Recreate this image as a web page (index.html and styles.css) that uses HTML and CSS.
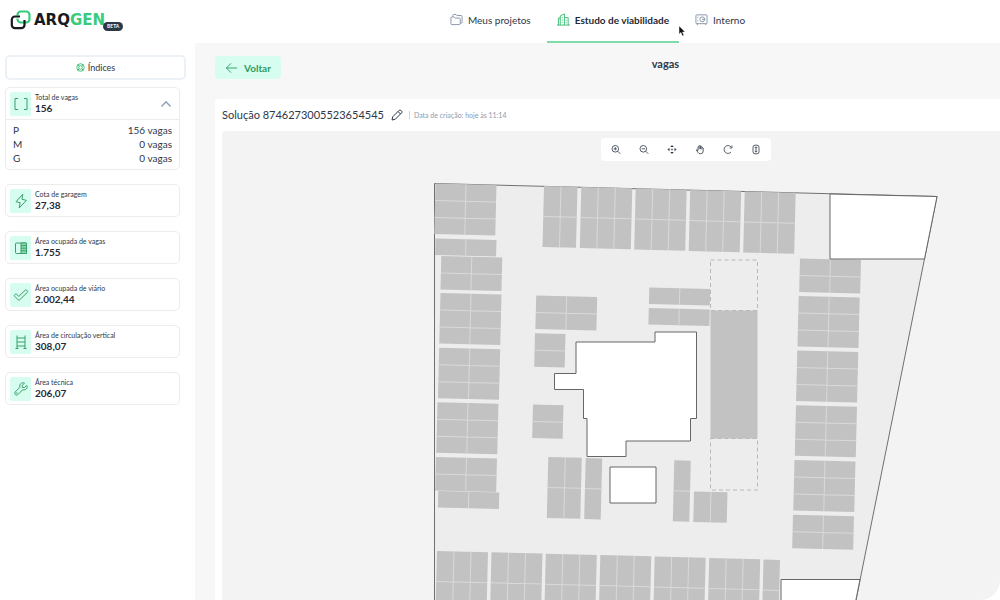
FILE: index.html
```html
<!DOCTYPE html>
<html lang="pt-BR">
<head>
<meta charset="utf-8">
<meta name="viewport" content="width=device-width, initial-scale=1">
<title>ARQGEN - Estudo de viabilidade</title>
<link rel="stylesheet" href="styles.css">
</head>
<body>
<header class="topbar">
  <a class="logo" href="#" aria-label="ARQGEN beta">
    <svg class="logo-mark" viewBox="0 0 22 20" fill="none" stroke-width="2.2" aria-hidden="true">
      <path class="mark-green" d="M7.500 5.500V4.700A3.200 3.200 0 0 1 10.700 1.500H16.300A3.200 3.200 0 0 1 19.500 4.700V9.300A3.200 3.200 0 0 1 16.300 12.500H10.700A3.200 3.200 0 0 1 7.500 9.300V8.500"/>
      <path class="mark-dark" d="M10 6.500H5A3.200 3.200 0 0 0 1.800 9.700V15A3.200 3.200 0 0 0 5 18.200h6.300a3.200 3.200 0 0 0 3.200-3.200V10"/>
    </svg>
    <span class="logo-text">ARQ<span class="logo-accent">GEN</span></span>
    <span class="beta">BETA</span>
  </a>
  <nav class="tabs">
    <a class="tab" href="#">
      <svg class="tab-icon" viewBox="0 0 14 14" aria-hidden="true"><path d="M3 4V2.500q0-1 1-1h2.500l1 1.200H12q1 0 1 1V10q0 1-1 1h-1M1 5.200q0-1 1-1h2.300l1.200 1.300H10q1 0 1 1v5q0 1-1 1H2q-1 0-1-1z"/></svg>
      Meus projetos
    </a>
    <a class="tab active" href="#" aria-current="page">
      <svg class="tab-icon" viewBox="0 0 14 14" aria-hidden="true"><path d="M1.500 13V5.500h2V3.200L8 1v12M8 5h4v8M0 13h14M3.500 5.500V13M5.700 4.500v1M5.700 7v1M5.700 9.500v1M10 7.500v1M10 10v1"/></svg>
      Estudo de viabilidade
    </a>
    <a class="tab" href="#">
      <svg class="tab-icon" viewBox="0 0 14 14" aria-hidden="true"><rect x="1" y="2" width="12" height="9.500" rx="1"/><path d="M2.500 11.500V13M11.500 11.500V13M3 4v1M3 8v1M7.500 6.800h3.500"/><circle cx="7.800" cy="6.800" r="2.600"/></svg>
      Interno
    </a>
  </nav>
</header>

<div class="layout">
  <aside class="sidebar">
    <button class="indices" type="button">
      <svg class="indices-icon" viewBox="0 0 10 10" aria-hidden="true"><circle cx="5" cy="5" r="4.200"/><circle cx="5" cy="5" r="2"/><path d="M2 2l1.500 1.500M8 2L6.500 3.500M2 8l1.500-1.500M8 8L6.500 6.500"/></svg>
      Índices
    </button>
    <section class="metric">
      <div class="metric-head">
        <span class="metric-icon"><svg viewBox="0 0 16 16" aria-hidden="true"><path d="M5 2.500H2v11h3M11 2.500h3v11h-3"/></svg></span>
        <div class="metric-text"><span class="metric-label">Total de vagas</span><strong>156</strong></div>
        <button class="toggle" type="button" aria-label="Recolher" aria-expanded="true"><svg viewBox="0 0 12 8" aria-hidden="true"><path d="M1.500 6.500L6 1.800l4.500 4.700"/></svg></button>
      </div>
      <dl class="breakdown">
        <div><dt>P</dt><dd>156 vagas</dd></div>
        <div><dt>M</dt><dd>0 vagas</dd></div>
        <div><dt>G</dt><dd>0 vagas</dd></div>
      </dl>
    </section>
    <section class="metric"><div class="metric-head">
      <span class="metric-icon"><svg viewBox="0 0 16 16" aria-hidden="true"><path d="M9.800 1.300L3 8.700l4.200 1-1 5.200L13.400 7.400 9 6.200z"/></svg></span>
      <div class="metric-text"><span class="metric-label">Cota de garagem</span><strong>27,38</strong></div>
    </div></section>
    <section class="metric"><div class="metric-head">
      <span class="metric-icon"><svg viewBox="0 0 16 16" aria-hidden="true"><rect x="2.500" y="3" width="11" height="10.500" rx="1"/><path class="tint" d="M8 3h5.500v10.500H8z"/><path d="M8 5.600h5.500M8 8.200h5.500M8 10.800h5.500"/></svg></span>
      <div class="metric-text"><span class="metric-label">Área ocupada de vagas</span><strong>1.755</strong></div>
    </div></section>
    <section class="metric"><div class="metric-head">
      <span class="metric-icon"><svg viewBox="0 0 16 16" aria-hidden="true"><path d="M1.600 9.300q-.7-.8.1-1.500l.5-.5q.8-.6 1.500.1l2.100 2 6.400-6.100q.8-.7 1.500 0l.7.7q.7.7 0 1.400l-7.800 7.400q-.8.6-1.500 0z"/></svg></span>
      <div class="metric-text"><span class="metric-label">Área ocupada de viário</span><strong>2.002,44</strong></div>
    </div></section>
    <section class="metric"><div class="metric-head">
      <span class="metric-icon"><svg viewBox="0 0 16 16" aria-hidden="true"><path d="M4 1.500v13M12 1.500v13M4 4h8M4 8h8M4 12h8M2.500 14.500h3M10.500 14.500h3"/></svg></span>
      <div class="metric-text"><span class="metric-label">Área de circulação vertical</span><strong>308,07</strong></div>
    </div></section>
    <section class="metric"><div class="metric-head">
      <span class="metric-icon"><svg viewBox="0 0 16 16" aria-hidden="true"><path d="M13.800 4.400l-2.400 2.200-2-.1-.2-2L11.500 2C8.700 1 6.200 3 6.900 6.300L2.200 11q-1 1.400.1 2.500t2.600.1l4.700-4.800c3.400.8 5.300-1.800 4.200-4.400z"/><circle cx="3.900" cy="12" r=".3"/></svg></span>
      <div class="metric-text"><span class="metric-label">Área técnica</span><strong>206,07</strong></div>
    </div></section>
  </aside>

  <main class="content">
    <div class="page-head">
      <button class="back" type="button">
        <svg viewBox="0 0 14 12" aria-hidden="true"><path d="M13 6H1.500M6.500 1L1.500 6l5 5"/></svg>
        Voltar
      </button>
      <h1 class="page-title">vagas</h1>
    </div>
    <section class="card">
      <div class="card-head">
        <h2 class="solution">Solução 8746273005523654545</h2>
        <button class="edit" type="button" aria-label="Editar nome"><svg viewBox="0 0 12 12" aria-hidden="true"><path d="M1 11l.8-3.300L8.200 1.300q.8-.7 1.600 0l.9.9q.7.8 0 1.600L4.300 10.200zM7 2.500L9.500 5"/></svg></button>
        <span class="created">Data de criação: hoje às 11:14</span>
      </div>
      <div class="canvas">
        <svg class="plan" viewBox="222 131 778 469" preserveAspectRatio="xMinYMin slice" role="img" aria-label="Planta de vagas">
          <defs>
            <g id="h1"><path class="slot" d="M0 0h61v16.500H0z"/><path class="mark" d="M30.500 0v16.500"/></g>
            <g id="h2"><path class="slot" d="M0 0h61v33.500H0z"/><path class="mark" d="M30.500 0v33.500M0 17h61"/></g>
            <g id="h3"><path class="slot" d="M0 0h61v50.500H0z"/><path class="mark" d="M30.500 0v50.500M0 17h61M0 34h61"/></g>
            <g id="c2"><path class="slot" d="M0 0h30.500v33.500H0z"/><path class="mark" d="M0 17h30.500"/></g>
            <g id="v1"><path class="slot" d="M0 0h16.500v61H0z"/><path class="mark" d="M0 30.500h16.500"/></g>
            <g id="v2"><path class="slot" d="M0 0h33.500v61H0z"/><path class="mark" d="M17 0v61M0 30.500h33.500"/></g>
            <g id="v3"><path class="slot" d="M0 0h51v61H0z"/><path class="mark" d="M17 0v61M34 0v61M0 30.500h51"/></g>
            <g id="r2"><path class="slot" d="M0 0h33.500v30.500H0z"/><path class="mark" d="M17 0v30.500"/></g>
          </defs>
          <path class="lot" d="M434.500 183.500L937 196.500 836 700H434.500z"/>
          <path class="boundary" d="M434.500 700V183.500L937 196.500 836 700"/>
          <g>
            <use href="#h3" transform="translate(435.500 183.500) rotate(1.400)"/>
            <use href="#h1" transform="translate(435.500 238.500) rotate(1.400)"/>
            <use href="#h2" transform="translate(441.300 256) rotate(1.400)"/>
            <use href="#h3" transform="translate(440.500 293) rotate(1.400)"/>
            <use href="#h3" transform="translate(439.200 347.700) rotate(1.400)"/>
            <use href="#h3" transform="translate(437.500 402.300) rotate(1.400)"/>
            <use href="#h2" transform="translate(436 457) rotate(1.400)"/>
            <use href="#h1" transform="translate(438.300 491) rotate(1.400)"/>

            <use href="#v2" transform="translate(544 186) rotate(1.400)"/>
            <use href="#v3" transform="translate(581.300 187) rotate(1.400)"/>
            <use href="#v3" transform="translate(635.700 188.500) rotate(1.400)"/>
            <use href="#v3" transform="translate(690.200 190) rotate(1.400)"/>
            <use href="#v3" transform="translate(744.700 191.500) rotate(1.400)"/>

            <use href="#h2" transform="translate(536.200 295.500) rotate(1.400)"/>
            <use href="#c2" transform="translate(535 333.300) rotate(1.400)"/>
            <use href="#c2" transform="translate(533 404.500) rotate(1.400)"/>
            <use href="#h1" transform="translate(649.300 287.500) rotate(1.400)"/>
            <use href="#h1" transform="translate(648.800 308) rotate(1.400)"/>
            <use href="#v2" transform="translate(548.300 457) rotate(1.400)"/>
            <use href="#v1" transform="translate(585.700 458) rotate(1.400)"/>
            <use href="#v1" transform="translate(674.300 460.300) rotate(1.400)"/>
            <use href="#r2" transform="translate(694 491.500) rotate(1.400)"/>

            <use href="#h2" transform="translate(800 258.500) rotate(1.400)"/>
            <use href="#h3" transform="translate(798.700 296) rotate(1.400)"/>
            <use href="#h3" transform="translate(797.300 350.500) rotate(1.400)"/>
            <use href="#h3" transform="translate(796 405.300) rotate(1.400)"/>
            <use href="#h3" transform="translate(794.500 460) rotate(1.400)"/>
            <use href="#h2" transform="translate(793 514.700) rotate(1.400)"/>

            <use href="#v3" transform="translate(437 551) rotate(1.400)"/>
            <use href="#v3" transform="translate(491.500 552.300) rotate(1.400)"/>
            <use href="#v3" transform="translate(545.800 553.700) rotate(1.400)"/>
            <use href="#v3" transform="translate(600.300 555) rotate(1.400)"/>
            <use href="#v3" transform="translate(654.700 556.500) rotate(1.400)"/>
            <use href="#v3" transform="translate(709.200 558) rotate(1.400)"/>
            <use href="#v1" transform="translate(763.500 559.500) rotate(1.400)"/>
          </g>
          <path class="slot" d="M710.500 310.500H757.500V438.500H710.500z"/>
          <path class="ramp" d="M710.500 260H757.500V310.500H710.500zM710.500 438.500H757.500V490H710.500z"/>
          <path class="room" d="M655 342V332H696.500V418.500H690.500V441H626V456.500H587V418.500H583.500V389.500H554.500V373.500H576V342z"/>
          <path class="room" d="M610 467H656V503H610zM830 194V259H924.500L937 196.500zM781 700V579.500H860L836 700z"/>
        </svg>
        <div class="tools" role="toolbar" aria-label="Ferramentas da planta">
          <button type="button" aria-label="Aproximar"><svg viewBox="0 0 10 10"><circle cx="4.300" cy="4.300" r="3.300"/><path d="M6.800 6.800L9.300 9.300M2.700 4.300h3.200M4.300 2.700v3.200"/></svg></button>
          <button type="button" aria-label="Afastar"><svg viewBox="0 0 10 10"><circle cx="4.300" cy="4.300" r="3.300"/><path d="M6.800 6.800L9.300 9.300M2.700 4.300h3.200"/></svg></button>
          <button type="button" aria-label="Centralizar"><svg class="solid" viewBox="0 0 10 10"><path d="M5 .5l1.700 2H3.300zM5 9.500l1.700-2H3.300zM.5 5l2-1.700v3.400zM9.500 5l-2-1.700v3.400zM4.300 4.300h1.400v1.400H4.300z"/></svg></button>
          <button type="button" aria-label="Mover"><svg viewBox="0 0 10 10"><path d="M3 6V2.300q.6-.8 1.200 0V1.300q.7-.8 1.300 0v.8q.7-.7 1.300.1v1q.9-.6 1.400.3v3q0 2.800-2.700 2.800-1.800 0-2.600-1.500L1.300 5.500Q1.600 4.500 3 6M4.200 2.300v2.400M5.500 2.200v2.500M6.800 3.200v1.700"/></svg></button>
          <button type="button" aria-label="Girar"><svg viewBox="0 0 10 10"><path d="M8 7.500A3.900 3.900 0 1 1 8 2.500M9 1v2.500H6.700"/></svg></button>
          <button type="button" aria-label="Altura"><svg viewBox="0 0 10 10"><rect x="2" y=".7" width="6" height="8.600" rx="2"/><path d="M5 2.500v5M3.800 3.500L5 2.300l1.200 1.200M3.800 6.500L5 7.700l1.200-1.200"/></svg></button>
        </div>
      </div>
    </section>
  </main>
</div>
<svg class="pointer" viewBox="0 0 8 12" aria-hidden="true"><path d="M1 .8v8.400l1.900-1.700 1.500 3.500 1.600-.7-1.500-3.300h2.700z"/></svg>
</body>
</html>
```
FILE: styles.css
```css
* { box-sizing: border-box; }

body {
  margin: 0;
  height: 100vh;
  min-height: 600px;
  display: flex;
  flex-direction: column;
  background: #fff;
  color: #2d3748;
  font: 10px/14px Lato, "Liberation Sans", sans-serif;
}

button {
  margin: 0;
  padding: 0;
  border: 0;
  background: none;
  color: inherit;
  font: inherit;
  cursor: pointer;
}

a { color: inherit; text-decoration: none; }
svg { display: block; fill: none; stroke: currentColor; }

.topbar {
  display: grid;
  grid-template-columns: 195px 1fr;
  height: 43px;
  flex: none;
}

.logo { display: flex; align-items: center; padding: 0 0 4px 10px; }
.logo-mark { width: 22px; height: 20px; flex: none; }
.mark-green { stroke: #38cb7d; }
.mark-dark { stroke: #171b20; }
.logo-text {
  margin-left: 2px;
  color: #171b20;
  font: bold 15px/18px "DejaVu Sans", sans-serif;
}
.logo-accent { color: #38cb7d; }
.beta {
  align-self: flex-end;
  margin: 0 0 8px -2px;
  padding: 0 4px;
  border-radius: 5px;
  background: #2d3748;
  color: #fff;
  font-size: 5px;
  font-weight: 700;
  line-height: 9px;
}

.tabs { display: flex; justify-content: center; gap: 6px; }
.tab {
  display: flex;
  align-items: center;
  gap: 5px;
  padding: 0 10px 2px;
  border-bottom: 2px solid transparent;
}
.tab-icon { width: 13px; height: 13px; color: #8492a8; }
.active { border-color: #7fdcaa; color: #1f2937; font-weight: 700; }
.active .tab-icon { color: #38b96f; }

.layout {
  display: grid;
  grid-template-columns: 195px 1fr;
  flex: 1;
  min-height: 0;
}

.sidebar { padding: 12px 15px 0 5px; }
.indices {
  display: flex;
  align-items: center;
  justify-content: center;
  gap: 3px;
  width: calc(100% + 6px);
  height: 25px;
  margin-bottom: 7px;
  border: 2px solid #ebf1f7;
  border-radius: 5px;
  font-size: 9px;
}
.indices-icon { width: 9px; height: 9px; color: #38b96f; }

.metric {
  margin-bottom: 14px;
  border: 1px solid #ececec;
  border-radius: 5px;
}
.metric-head {
  display: flex;
  align-items: center;
  gap: 4px;
  height: 31px;
  padding: 0 7px 0 4px;
}
.metric-icon {
  display: grid;
  place-items: center;
  width: 21px;
  height: 24px;
  border-radius: 2px;
  background: #d6fdf0;
  color: #38a169;
}
.metric-icon svg { width: 16px; height: 16px; }
.tint { fill: #8fd9b4; }
.metric-text { display: flex; flex-direction: column; flex: 1; }
.metric-label { font-size: 7px; line-height: 10px; }
.metric-text strong { font-size: 10px; line-height: 13px; color: #1f2937; }
.toggle svg { width: 12px; height: 8px; color: #8fa0b8; stroke-width: 1.5; }

.breakdown {
  margin: 0;
  padding: 3px 7px 4px;
  border-top: 1px solid #ececec;
}
.breakdown div { display: flex; justify-content: space-between; }
.breakdown dd { margin: 0; }

.content {
  display: flex;
  flex-direction: column;
  min-width: 0;
  padding: 13px 0 0 20px;
  background: #f7f7f7;
}
.page-head { display: flex; gap: 50px; }
.back {
  display: flex;
  align-items: center;
  gap: 6px;
  height: 23px;
  padding: 0 10px;
  border-radius: 4px;
  background: #d6fdf0;
  color: #2f9e62;
  font-weight: 700;
}
.back svg { width: 13px; height: 12px; }
.page-title {
  flex: 1;
  margin: 0;
  font-size: 11px;
  line-height: 16px;
  text-align: center;
}

.card {
  display: flex;
  flex-direction: column;
  flex: 1;
  min-height: 0;
  margin-top: 20px;
  padding-left: 7px;
  border-radius: 4px 0 0 0;
  background: #fff;
}
.card-head { display: flex; align-items: center; height: 32px; }
.solution { margin: 0; font-size: 11px; font-weight: 400; }
.edit { margin: 0 6px 0 7px; }
.edit svg { width: 12px; height: 12px; }
.created {
  padding-left: 4px;
  border-left: 1px solid #cbd5e0;
  color: #8d9bb0;
  font-size: 7px;
  line-height: 8px;
}

.canvas {
  position: relative;
  flex: 1;
  min-height: 0;
  overflow: hidden;
  border-radius: 4px 0 20px 0;
  background: #f3f3f3;
}
.plan { width: 100%; height: 100%; stroke: none; }
.lot { fill: #ededed; }
.slot { fill: #c2c2c2; }
.mark { stroke: #d9d9d9; stroke-width: 1; }
.ramp { stroke: #b8b8b8; stroke-width: 1; stroke-dasharray: 4 3; }
.room { fill: #fff; stroke: #666; stroke-width: 1; }
.boundary { stroke: #707070; stroke-width: 1; }

.tools {
  position: absolute;
  top: 7px;
  left: calc(50% + 75px);
  display: flex;
  gap: 18px;
  padding: 6px 10px;
  transform: translateX(-50%);
  border-radius: 4px;
  background: #fff;
}
.tools svg { width: 10px; height: 11px; stroke-width: 0.8; }
.tools .solid { fill: currentColor; stroke: none; }

.pointer {
  position: absolute;
  top: 25px;
  left: 678px;
  width: 8px;
  height: 12px;
  fill: #111;
  stroke: #fff;
  stroke-width: 0.5;
}
```
